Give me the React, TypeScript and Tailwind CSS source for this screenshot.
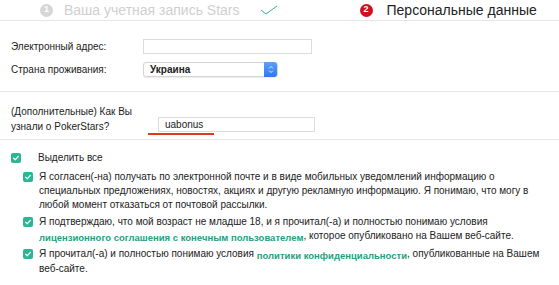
import { ReactNode } from "react";

function Box() {
  return (
    <span className="flex h-[10px] w-[10px] shrink-0 items-center justify-center rounded-[2px] bg-[#2bb592]">
      <svg viewBox="0 0 10 10" className="h-[8px] w-[8px]">
        <path d="M2 5.2 L4.1 7.2 L8 3" fill="none" stroke="#fff" strokeWidth="1.5" strokeLinecap="round" strokeLinejoin="round" />
      </svg>
    </span>
  );
}

function Consent({ children, pad }: { children: ReactNode; pad: string }) {
  return (
    <div className={`flex items-start ${pad}`}>
      <span className="mt-[2px]">
        <Box />
      </span>
      <p className="ml-[6px] pr-[14px] text-[10px] leading-[14px] text-[#222]">{children}</p>
    </div>
  );
}

function Link({ children }: { children: ReactNode }) {
  return <span className="align-[-2px] text-[9.5px] font-bold leading-[12px] text-[#1f9f82]">{children}</span>;
}

export default function App() {
  return (
    <div className="h-[285px] w-[559px] overflow-hidden bg-white font-['Liberation_Sans',Arial,sans-serif]">
      {/* steps */}
      <div className="flex h-[21px] items-center border-b border-[#e6e6e6]">
        <span className="ml-[40px] flex h-[13px] w-[13px] items-center justify-center rounded-full bg-[#d6d6d6] text-[9px] font-bold text-white">1</span>
        <span className="ml-[11px] text-[14px] text-[#cfcfcf]">Ваша учетная запись Stars</span>
        <svg viewBox="0 0 18 10" className="ml-[20px] h-[10px] w-[18px]">
          <path d="M1 5 L6 9 L17 1" fill="none" stroke="#2bb592" strokeWidth="1" />
        </svg>
        <span className="ml-[82px] flex h-[13px] w-[13px] items-center justify-center rounded-full bg-[#d0101e] text-[9px] font-bold text-white">2</span>
        <span className="ml-[14px] text-[14px] text-[#222]">Персональные данные</span>
      </div>

      {/* account fields */}
      <div className="flex flex-col gap-[8px] pb-[14px] pl-[11px] pt-[18px] text-[10px] leading-[15px] text-[#222]">
        <div className="flex items-center">
          <span className="w-[132px]">Электронный адрес:</span>
          <span className="h-[15px] w-[169px] border border-[#dcdcdc] bg-white" />
        </div>
        <div className="flex items-center">
          <span className="w-[132px]">Страна проживания:</span>
          <span className="flex h-[15px] w-[135px] items-center rounded-[3px] border border-[#d4d4d4] bg-white shadow-[0_1px_1px_rgba(0,0,0,0.08)]">
            <span className="ml-[6px] flex-1 text-[10px] font-bold text-[#222]">Украина</span>
            <span className="flex h-[15px] w-[13px] items-center justify-center rounded-r-[3px] bg-gradient-to-b from-[#5aa2f7] to-[#2f77ef]">
              <svg viewBox="0 0 8 12" className="h-[9px] w-[6px]">
                <path d="M1.5 4.5 L4 2 L6.5 4.5 M1.5 7.5 L4 10 L6.5 7.5" fill="none" stroke="#fff" strokeWidth="1.1" />
              </svg>
            </span>
          </span>
        </div>
      </div>

      {/* optional source */}
      <div className="flex items-start border-y border-[#e6e6e6] pb-[5px] pl-[11px] pt-[12px] text-[10px] text-[#222]">
        <p className="w-[147px] leading-[15px]">
          (Дополнительные) Как Вы
          <br />
          узнали о PokerStars?
        </p>
        <div className="relative mt-[13px]">
          <span className="flex h-[15px] w-[157px] items-center border border-[#dcdcdc] pl-[6px] text-[10px] text-[#222]">uabonus</span>
          <span className="absolute left-[-10px] top-[16px] h-[2px] w-[66px] bg-[#e2371c]" />
        </div>
      </div>

      {/* consents */}
      <div className="pl-[11px] pt-[11px]">
        <div className="flex items-center">
          <Box />
          <span className="ml-[17px] text-[10px] leading-[14px] text-[#222]">Выделить все</span>
        </div>
        <div className="pl-[12px] pt-[5px]">
          <Consent pad="">
            Я согласен(-на) получать по электронной почте и в виде мобильных уведомлений информацию о специальных предложениях, новостях, акциях и другую рекламную информацию. Я понимаю, что могу в любой момент отказаться от почтовой рассылки.
          </Consent>
          <Consent pad="pt-[3px]">
            Я подтверждаю, что мой возраст не младше 18, и я прочитал(-а) и полностью понимаю условия <Link>лицензионного соглашения с конечным пользователем</Link>, которое опубликовано на Вашем веб-сайте.
          </Consent>
          <Consent pad="pt-[3px]">
            Я прочитал(-а) и полностью понимаю условия <Link>политики конфиденциальности</Link>, опубликованные на Вашем веб-сайте.
          </Consent>
        </div>
      </div>
    </div>
  );
}
